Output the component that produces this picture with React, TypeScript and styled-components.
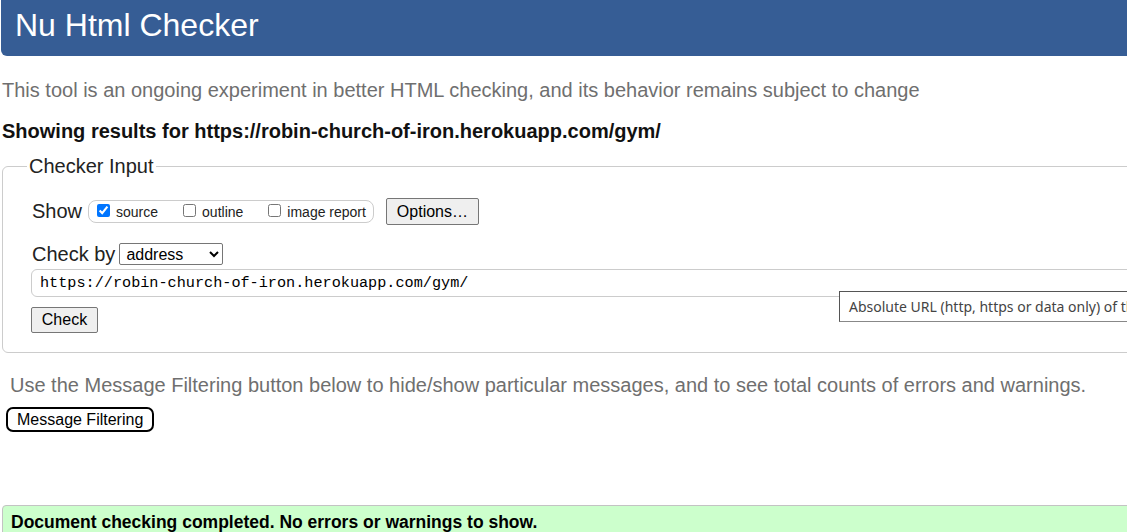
import React from 'react';
import styled, { createGlobalStyle } from 'styled-components';

const GlobalStyle = createGlobalStyle`
  html, body {
    margin: 0;
    padding: 0;
    overflow: hidden;
    background: #fff;
  }
  body {
    font-family: 'Liberation Sans', Arial, sans-serif;
    color: #000;
  }
`;

const Page = styled.div`
  width: 1180px;
`;

const Header = styled.h1`
  margin: 0 0 0 1px;
  height: 56px;
  box-sizing: border-box;
  padding: 7px 0 0 14px;
  background: #365d95;
  color: #fff;
  font-size: 32px;
  font-weight: normal;
  line-height: 37px;
  border-radius: 0 0 6px 6px;
`;

const Intro = styled.p`
  margin: 23px 0 0 2px;
  font-size: 20px;
  line-height: 23px;
  color: #6f6f6f;
`;

const Results = styled.p`
  margin: 19px 0 0 2px;
  font-size: 20px;
  line-height: 20px;
  font-weight: bold;
  color: #111;
`;

const Fieldset = styled.fieldset`
  margin: 14px 0 0 2px;
  padding: 20px 0 19px 28px;
  border: 1px solid #ccc;
  border-radius: 6px;
  min-width: 0;
`;

const Legend = styled.legend`
  margin-left: -4px;
  padding: 0 2px;
  font-size: 20px;
  line-height: 23px;
  color: #222;
`;

const Row = styled.div<{ $h: number; $mt?: number }>`
  display: flex;
  align-items: center;
  height: ${p => p.$h}px;
  margin-top: ${p => p.$mt ?? 0}px;
  position: relative;
`;

const Label = styled.span`
  font-size: 20px;
  color: #222;
  margin-left: 1px;
`;

const Pill = styled.div`
  display: flex;
  align-items: center;
  height: 23px;
  box-sizing: border-box;
  margin-left: 6px;
  padding: 0 7px 0 8px;
  border: 1px solid #ccc;
  border-radius: 8px;
`;

const Opt = styled.label<{ $gap?: boolean }>`
  display: flex;
  align-items: center;
  font-size: 14px;
  color: #222;
  margin-left: ${p => (p.$gap ? 25 : 0)}px;

  input {
    width: 13px;
    height: 13px;
    margin: 0 6px 2px 0;
  }
`;

const Button = styled.button<{ $w: number; $h: number }>`
  width: ${p => p.$w}px;
  height: ${p => p.$h}px;
  padding: 0;
  font-family: 'Liberation Sans', Arial, sans-serif;
  font-size: 16px;
  color: #000;
  background: #efefef;
  border: 1px solid #767676;
  border-radius: 2px;
`;

const Select = styled.select`
  margin-left: 4px;
  width: 104px;
  height: 22px;
  font-family: 'Liberation Sans', Arial, sans-serif;
  font-size: 16px;
  color: #000;
  background: #fff;
  border: 1px solid #767676;
  border-radius: 2px;
  padding: 0 2px;
`;

const UrlInput = styled.input`
  flex: 1;
  height: 28px;
  box-sizing: border-box;
  margin: 0;
  padding: 0 8px;
  font-family: 'Liberation Mono', 'DejaVu Sans Mono', monospace;
  font-size: 15.2px;
  color: #000;
  border: 1px solid #ccc;
  border-radius: 6px;
  outline: none;
`;

const Tooltip = styled.div`
  position: absolute;
  top: 22px;
  left: 808px;
  height: 31px;
  box-sizing: border-box;
  padding: 0 9px;
  display: flex;
  align-items: center;
  white-space: nowrap;
  font-family: 'Noto Sans', 'Open Sans', sans-serif;
  font-size: 14px;
  color: #444;
  background: #fff;
  border: 1px solid #555;
  border-bottom-color: #888;
  border-right-color: #888;
  z-index: 2;
`;

const Note = styled.p`
  margin: 21px 0 0 10px;
  font-size: 20px;
  line-height: 23px;
  color: #6f6f6f;
`;

const FilterButton = styled.button`
  margin: 10px 0 0 6px;
  height: 25px;
  padding: 0 9px;
  font-family: 'Liberation Sans', Arial, sans-serif;
  font-size: 16px;
  color: #000;
  background: #fff;
  border: 2px solid #000;
  border-radius: 7px;
`;

const Success = styled.div`
  margin: 73px 0 0 2px;
  height: 60px;
  box-sizing: border-box;
  padding: 6px 0 0 8px;
  background: #ccffcc;
  border: 1px solid #c3c3c3;
  border-radius: 4px 0 0 0;
  font-size: 17.5px;
  line-height: 20px;
  font-weight: bold;
  color: #000;
`;

const url = 'https://robin-church-of-iron.herokuapp.com/gym/';

export default function App() {
  return (
    <Page>
      <GlobalStyle />
      <Header>Nu Html Checker</Header>
      <Intro>This tool is an ongoing experiment in better HTML checking, and its behavior remains subject to change</Intro>
      <Results>Showing results for {url}</Results>
      <Fieldset>
        <Legend>Checker Input</Legend>
        <Row $h={27}>
          <Label>Show</Label>
          <Pill>
            <Opt><input type="checkbox" defaultChecked />source</Opt>
            <Opt $gap><input type="checkbox" />outline</Opt>
            <Opt $gap><input type="checkbox" />image report</Opt>
          </Pill>
          <Button $w={93} $h={27} style={{ marginLeft: 12 }}>Options…</Button>
        </Row>
        <Row $h={22} $mt={18}>
          <Label>Check by</Label>
          <Select defaultValue="address">
            <option value="address">address</option>
            <option value="file">file upload</option>
            <option value="text">text input</option>
          </Select>
        </Row>
        <Row $h={28} $mt={4}>
          <UrlInput defaultValue={url} />
          <Tooltip>Absolute URL (http, https or data only) of the document to check</Tooltip>
        </Row>
        <Row $h={26} $mt={10}>
          <Button $w={67} $h={26}>Check</Button>
        </Row>
      </Fieldset>
      <Note>Use the Message Filtering button below to hide/show particular messages, and to see total counts of errors and warnings.</Note>
      <FilterButton>Message Filtering</FilterButton>
      <Success>Document checking completed. No errors or warnings to show.</Success>
    </Page>
  );
}
